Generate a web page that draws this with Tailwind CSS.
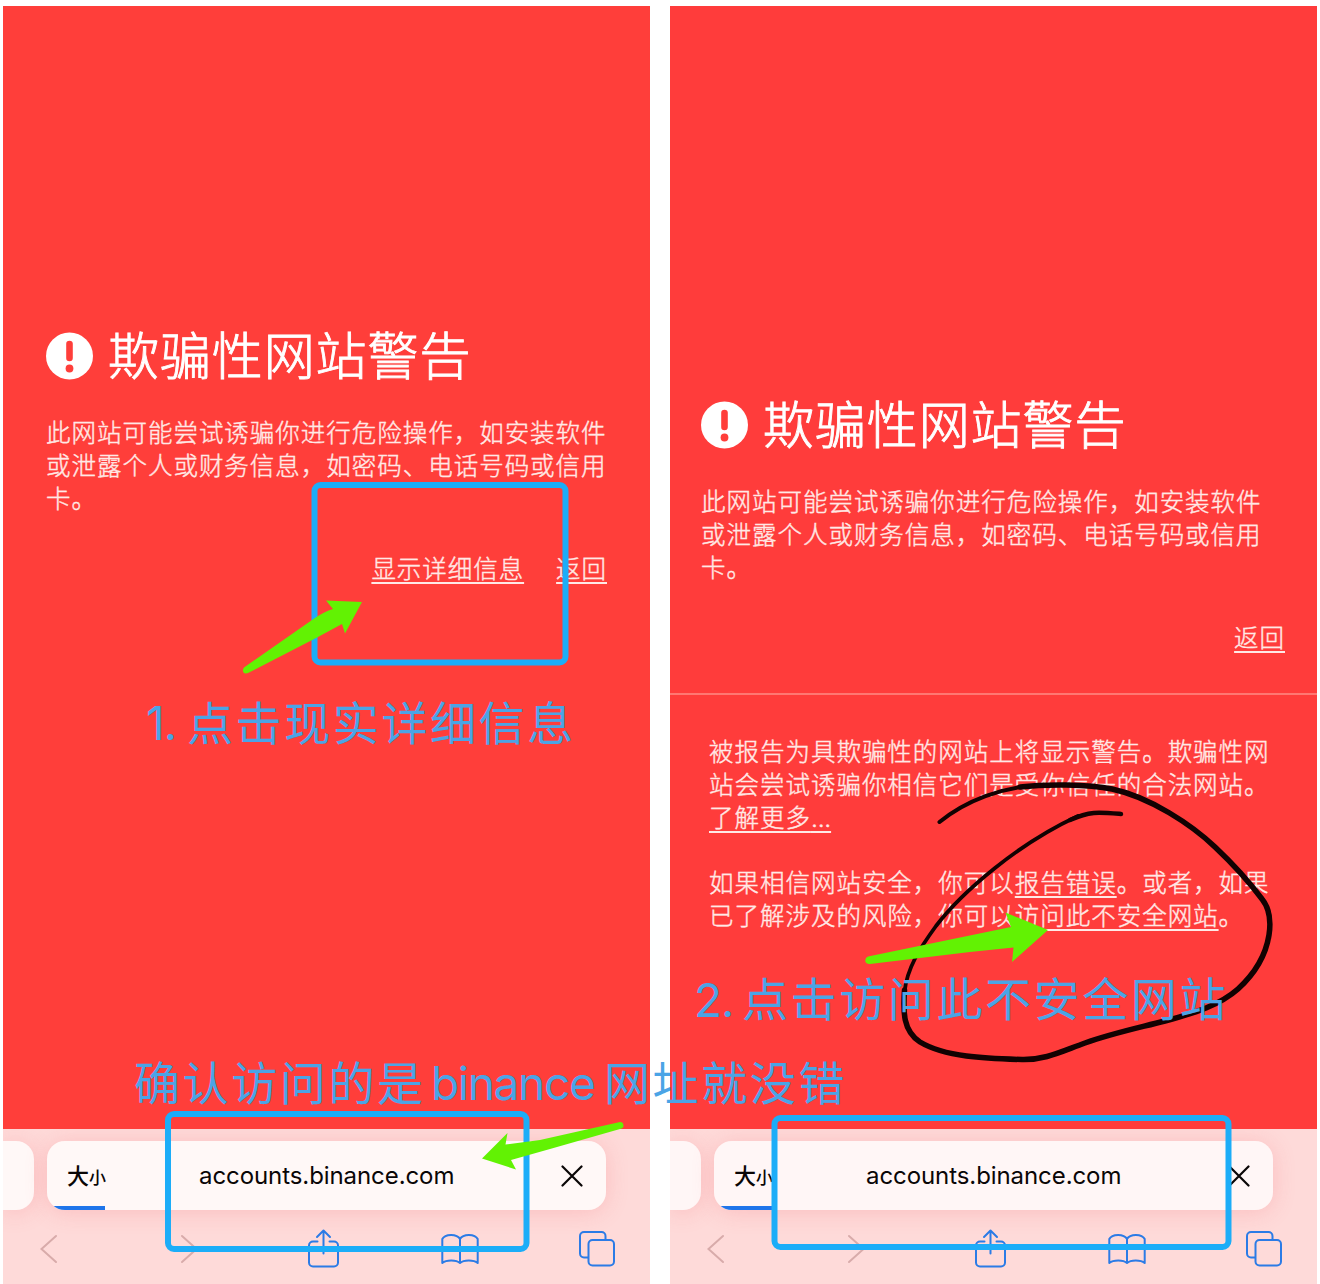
<!DOCTYPE html>
<html lang="zh-CN">
<head>
<meta charset="utf-8">
<title>欺骗性网站警告</title>
<script src="https://cdn.jsdelivr.net/npm/@tailwindcss/browser@4"></script>
</head>
<body class="bg-white">
<svg class="hidden">
  <defs>
    <symbol id="warn" viewBox="0 0 48 48"><circle cx="23.500" cy="24" r="23.5" fill="#fff"/><path d="M23.500 12v14" stroke="#ff3e3a" stroke-width="6.600" stroke-linecap="round"/><circle cx="23.500" cy="36.500" r="3.900" fill="#ff3e3a"/></symbol>
    <symbol id="back" viewBox="0 0 20 30"><path d="M17 2 2.500 15 17 28" fill="none" stroke="#d8abaa" stroke-width="2" stroke-linecap="round"/></symbol>
    <symbol id="share" viewBox="0 0 32 40"><g fill="none" stroke="#2b7be6" stroke-width="2" stroke-linecap="round" stroke-linejoin="round"><path d="M10.500 12.500H6a4 4 0 0 0-4 4v17a4 4 0 0 0 4 4h21a4 4 0 0 0 4-4v-17a4 4 0 0 0-4-4h-4.500M16.500 24.500V2M10 8 16.500 1.500 23 8"/></g></symbol>
    <symbol id="book" viewBox="0 0 38 32"><g fill="none" stroke="#2b7be6" stroke-width="2" stroke-linejoin="round"><path d="M19 6C16 .5 4 .5 1.300 6v24c4-3.500 14-3.500 17.700 0 3.700-3.500 13.700-3.500 17.700 0V6C34 .5 22 .5 19 6ZM19 6v24"/></g></symbol>
    <symbol id="tabs" viewBox="0 0 36 36"><g fill="none" stroke="#2b7be6" stroke-width="2"><path d="M9.500 26.500H5a4 4 0 0 1-4-4V5a4 4 0 0 1 4-4h17.500a4 4 0 0 1 4 4v4"/><rect x="9.500" y="9" width="25.500" height="25.500" rx="4"/></g></symbol>
    <symbol id="close" viewBox="0 0 22 22"><path d="m1.500 1.500 19 19m0-19-19 19" stroke="#0a0606" stroke-width="2.200" stroke-linecap="round"/></symbol>
  </defs>
</svg>

<div class="relative h-[1284px] w-[1320px] overflow-hidden bg-white font-['Inter','Noto_Sans_CJK_SC',sans-serif]">
  <main class="flex h-full gap-5 pt-[6px] pl-[3px]">

    <section class="flex w-[647px] flex-col">
      <div class="h-[1123px] bg-[#ff3e3a] pt-[320px] pr-[43px] pl-[43px] font-['Noto_Sans_CJK_SC',sans-serif] font-light text-[#ffe9e6] [-webkit-text-stroke:0.4px]">
        <h1 class="flex h-[60px] items-center gap-[14px] text-[51px] leading-[60px] tracking-[0.9px] whitespace-nowrap text-white [-webkit-text-stroke:0.9px]">
          <svg class="size-[48px] shrink-0 [-webkit-text-stroke:0px]"><use href="#warn"/></svg><span class="pb-[6px]">欺骗性网站警告</span>
        </h1>
        <p class="mt-[29px] text-[24.5px] leading-[33px] tracking-[0.98px] whitespace-nowrap">此网站可能尝试诱骗你进行危险操作，如安装软件<br>或泄露个人或财务信息，如密码、电话号码或信用<br>卡。</p>
        <div class="mt-[37px] flex justify-end gap-8 text-[24.5px] leading-[33px] tracking-[0.95px] whitespace-nowrap">
          <a class="underline decoration-2 underline-offset-[3.5px]">显示详细信息</a><a class="underline decoration-2 underline-offset-[3.5px]">返回</a>
        </div>
      </div>
      <div class="h-[155px] overflow-hidden bg-[#fedad9] pt-[12px]">
        <div class="flex h-[69px] gap-[13px]">
          <div class="w-[31px] rounded-r-[18px] bg-[#fff8f7] shadow-[0_2px_22px_rgba(240,90,100,0.22)]"></div>
          <div class="w-[559px] rounded-[18px] shadow-[0_2px_22px_rgba(240,90,100,0.22)]">
            <div class="relative flex h-full items-center justify-between overflow-hidden rounded-[18px] bg-[#fff8f7] pr-[23px] pl-[20px] text-[#0a0606]">
              <div class="flex items-baseline pb-[2px] font-['Noto_Sans_CJK_SC',sans-serif] font-medium"><span class="text-[22px]">大</span><span class="text-[17px]">小</span></div>
              <span class="absolute left-[152px] text-[24px] tracking-[-0.08px]">accounts.binance.com</span>
              <svg class="size-[22px]"><use href="#close"/></svg>
              <span class="absolute bottom-0 left-0 h-[4px] w-[58px] bg-[#1f75ea]"></span>
            </div>
          </div>
        </div>
        <div class="mt-[19px] flex h-[40px] items-center pl-[36px]">
          <svg class="h-[30px] w-[20px]"><use href="#back"/></svg>
          <svg class="ml-[120px] h-[30px] w-[20px] -scale-x-100"><use href="#back"/></svg>
          <svg class="ml-[108px] h-[40px] w-[32px]"><use href="#share"/></svg>
          <svg class="ml-[102px] h-[32px] w-[38px]"><use href="#book"/></svg>
          <svg class="ml-[100px] size-[36px]"><use href="#tabs"/></svg>
        </div>
      </div>
    </section>

    <section class="flex w-[647px] flex-col">
      <div class="h-[1123px] bg-[#ff3c3b] pt-[389px] font-['Noto_Sans_CJK_SC',sans-serif] font-light text-[#ffe9e6] [-webkit-text-stroke:0.4px]">
        <div class="h-[300px] border-b-2 border-[#ff7772] pr-[32px] pl-[31px]">
          <h1 class="flex h-[60px] items-center gap-[14px] text-[51px] leading-[60px] tracking-[0.9px] whitespace-nowrap text-white [-webkit-text-stroke:0.9px]">
            <svg class="size-[48px] shrink-0 [-webkit-text-stroke:0px]"><use href="#warn"/></svg><span class="pb-[6px]">欺骗性网站警告</span>
          </h1>
          <p class="mt-[29px] text-[24.5px] leading-[33px] tracking-[0.98px] whitespace-nowrap">此网站可能尝试诱骗你进行危险操作，如安装软件<br>或泄露个人或财务信息，如密码、电话号码或信用<br>卡。</p>
          <div class="mt-[37px] flex justify-end text-[24.5px] leading-[33px] tracking-[0.95px]">
            <a class="underline decoration-2 underline-offset-[3.5px]">返回</a>
          </div>
        </div>
        <div class="pt-[39px] pl-[39px] text-[24.5px] leading-[33px] tracking-[0.98px] whitespace-nowrap">
          <p>被报告为具欺骗性的网站上将显示警告。欺骗性网<br>站会尝试诱骗你相信它们是受你信任的合法网站。</p>
          <p class="h-[33px]"><a class="underline decoration-2 underline-offset-[3.5px]">了解更多<span class="font-['Inter'] tracking-[-0.2px]">...</span></a></p>
          <p class="mt-[32px]">如果相信网站安全，你可以<a class="underline decoration-2 underline-offset-[3.5px]">报告错误</a>。或者，如果<br>已了解涉及的风险，你可以<a class="underline decoration-2 underline-offset-[3.5px]">访问此不安全网站</a>。</p>
        </div>
      </div>
      <div class="h-[155px] overflow-hidden bg-[#fedad9] pt-[12px]">
        <div class="flex h-[69px] gap-[13px]">
          <div class="w-[31px] rounded-r-[18px] bg-[#fff6f6] shadow-[0_2px_22px_rgba(240,90,100,0.22)]"></div>
          <div class="w-[559px] rounded-[18px] shadow-[0_2px_22px_rgba(240,90,100,0.22)]">
            <div class="relative flex h-full items-center justify-between overflow-hidden rounded-[18px] bg-[#fff6f6] pr-[23px] pl-[20px] text-[#0a0606]">
              <div class="flex items-baseline pb-[2px] font-['Noto_Sans_CJK_SC',sans-serif] font-medium"><span class="text-[22px]">大</span><span class="text-[17px]">小</span></div>
              <span class="absolute left-[152px] text-[24px] tracking-[-0.08px]">accounts.binance.com</span>
              <svg class="size-[22px]"><use href="#close"/></svg>
              <span class="absolute bottom-0 left-0 h-[4px] w-[58px] bg-[#1f75ea]"></span>
            </div>
          </div>
        </div>
        <div class="mt-[19px] flex h-[40px] items-center pl-[36px]">
          <svg class="h-[30px] w-[20px]"><use href="#back"/></svg>
          <svg class="ml-[120px] h-[30px] w-[20px] -scale-x-100"><use href="#back"/></svg>
          <svg class="ml-[108px] h-[40px] w-[32px]"><use href="#share"/></svg>
          <svg class="ml-[102px] h-[32px] w-[38px]"><use href="#book"/></svg>
          <svg class="ml-[100px] size-[36px]"><use href="#tabs"/></svg>
        </div>
      </div>
    </section>
  </main>

  <!-- Hand-drawn annotations -->
  <svg class="absolute inset-0 h-[1284px] w-[1320px]" viewBox="0 0 1320 1284" fill="none">
    <g stroke="#120202" stroke-linecap="round" stroke-linejoin="round">
      <path d="M939.500 822C965 801 1003 786 1040 785.500" stroke-width="4"/>
      <path d="M1020 787C1045 784 1088 784 1112 789C1150 797 1192 825 1215 847C1232 863 1250 883 1262 899C1270 909 1271 922 1269 935C1265 960 1250 978 1238 989C1220 1005 1195 1013 1165 1021C1125 1031 1110 1034 1085 1043C1060 1052 1045 1060 1022 1059.500C985 1058.500 945 1057 920 1042C903 1031 903 1012 904.500 990" stroke-width="5.500"/>
      <path d="M904.500 992C907 968 920 948 936 926C952 905 975 884 995 868C1020 848 1050 829 1078 816" stroke-width="3.800"/>
      <path d="M1070 820C1090 811 1098 812 1121 814" stroke-width="4.500"/>
    </g>
    <g stroke="#1cadf8" stroke-width="6">
      <rect x="314.500" y="485" width="251" height="177.500" rx="6"/>
      <rect x="168" y="1114" width="358.500" height="135" rx="6"/>
      <rect x="774.500" y="1118" width="454" height="129" rx="6"/>
    </g>
    <g fill="#62f203">
      <path d="M362 602 326 600.500 333 609Q323 612 312 620L244 667.500Q242 670 243.500 672.500Q245 674 248 673L318 637 342 624 345 633.500Z"/>
      <path d="M1048 930 1005.500 912.500 1011 927 868 956.500Q864.500 958 865.500 962Q867 964.500 870 964L970 952 1013.500 947.500 1012 962Z"/>
      <path d="M482 1158.500 507.500 1133 505.500 1144.500 540 1140 620 1122Q623.500 1122 623.500 1126Q623.500 1128 620 1129L550 1149 511 1160 516 1169.500Z"/>
    </g>
  </svg>
  <p class="absolute top-[688px] left-[146px] flex text-[46px] leading-[70px] whitespace-nowrap text-[#4ba4e6]"><span class="w-[41px] tracking-[-1px]">1.</span><span class="-mt-[3px] font-['Noto_Sans_CJK_SC',sans-serif] tracking-[2.6px]">点击现实详细信息</span></p>
  <p class="absolute top-[965px] left-[694px] flex text-[46px] leading-[70px] whitespace-nowrap text-[#4ba4e6]"><span class="w-[48px] tracking-[-1px]">2.</span><span class="-mt-[4px] font-['Noto_Sans_CJK_SC',sans-serif] tracking-[2.6px]">点击访问此不安全网站</span></p>
  <p class="absolute top-[1048px] left-[134px] flex text-[46px] leading-[70px] whitespace-nowrap text-[#4ba4e6]"><span class="-mt-[3px] w-[297px] font-['Noto_Sans_CJK_SC',sans-serif] tracking-[2.6px]">确认访问的是</span><span class="w-[173px] tracking-[-1.3px]">binance</span><span class="-mt-[3px] font-['Noto_Sans_CJK_SC',sans-serif] tracking-[2.6px]">网址就没错</span></p>
</div>
</body>
</html>
